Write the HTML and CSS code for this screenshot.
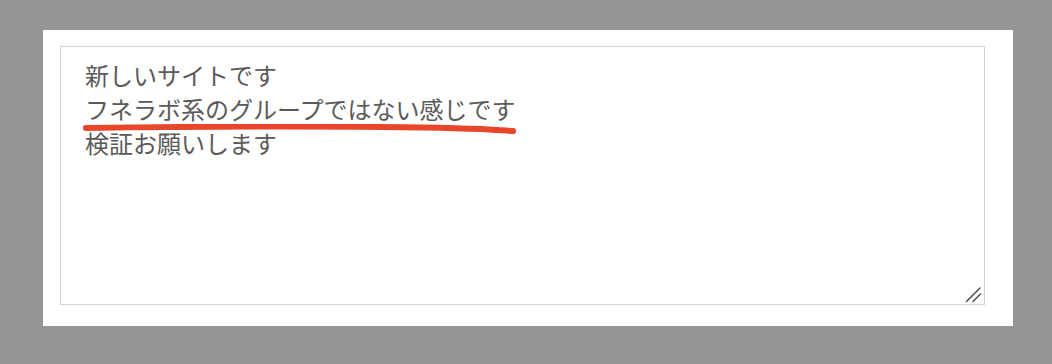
FILE: index.html
```html
<!DOCTYPE html>
<html lang="ja">
<head>
<meta charset="utf-8">
<link rel="stylesheet" href="styles.css">
</head>
<body>
<div class="panel">
  <div class="field">
    <textarea class="memo">新しいサイトです
フネラボ系のグループではない感じです
検証お願いします</textarea>
    <svg class="mark" width="440" height="14" viewBox="0 0 440 14">
      <path d="M4 4 C 80 3, 200 2, 300 3 S 400 5, 431 7" fill="none" stroke="#e8472a" stroke-width="6" stroke-linecap="round"/>
    </svg>
    <svg class="grip" width="18" height="18" viewBox="0 0 18 18">
      <path d="M2.5 16.5 L16 3 M9 16.5 L16.5 9" fill="none" stroke="#555" stroke-width="1.6" stroke-linecap="round"/>
    </svg>
  </div>
</div>
</body>
</html>
```
FILE: styles.css
```css
html, body {
  margin: 0;
  padding: 0;
  background: #959595;
}
body {
  padding: 30px 0 0 43px;
  height: 364px;
  box-sizing: border-box;
}
.panel {
  width: 970px;
  height: 296px;
  background: #fff;
  padding: 16px 0 0 17px;
  box-sizing: border-box;
}
.field {
  position: relative;
  width: 925px;
  height: 259px;
}
.memo {
  display: block;
  width: 925px;
  height: 259px;
  box-sizing: border-box;
  margin: 0;
  border: 1px solid #d4d4d4;
  padding: 11px 24px;
  font-family: "Noto Sans CJK JP", sans-serif;
  font-size: 24px;
  line-height: 34px;
  color: #5a5a5a;
  background: #fff;
  resize: none;
  outline: none;
}
.mark {
  position: absolute;
  left: 22px;
  top: 78px;
}
.grip {
  position: absolute;
  right: 3px;
  bottom: 2px;
}
```
